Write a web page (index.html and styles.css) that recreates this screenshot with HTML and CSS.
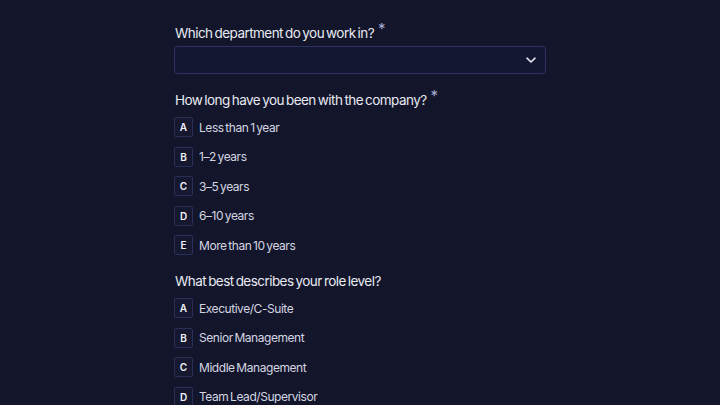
FILE: index.html
```html
<!DOCTYPE html>
<html lang="en">
<head>
<meta charset="utf-8">
<link rel="stylesheet" href="styles.css">
</head>
<body>
<main class="form">
  <section class="question">
    <label class="q-label">Which department do you work in? <span class="req">*</span></label>
    <div class="select">
      <svg class="chev" width="12" height="12" viewBox="0 0 12 12"><path d="M2 4.2 L6 8 L10 4.2" fill="none" stroke="#e4e4f0" stroke-width="1.6" stroke-linecap="round" stroke-linejoin="round"/></svg>
    </div>
  </section>
  <section class="question">
    <div class="q-label">How long have you been with the company? <span class="req">*</span></div>
    <ul class="options">
      <li class="opt"><span class="key">A</span><span class="txt">Less than 1 year</span></li>
      <li class="opt"><span class="key">B</span><span class="txt">1–2 years</span></li>
      <li class="opt"><span class="key">C</span><span class="txt">3–5 years</span></li>
      <li class="opt"><span class="key">D</span><span class="txt">6–10 years</span></li>
      <li class="opt"><span class="key">E</span><span class="txt">More than 10 years</span></li>
    </ul>
  </section>
  <section class="question">
    <div class="q-label">What best describes your role level?</div>
    <ul class="options">
      <li class="opt"><span class="key">A</span><span class="txt">Executive/C-Suite</span></li>
      <li class="opt"><span class="key">B</span><span class="txt">Senior Management</span></li>
      <li class="opt"><span class="key">C</span><span class="txt">Middle Management</span></li>
      <li class="opt"><span class="key">D</span><span class="txt">Team Lead/Supervisor</span></li>
    </ul>
  </section>
</main>
</body>
</html>
```
FILE: styles.css
```css
html, body {
  margin: 0;
  padding: 0;
  background: #13162a;
  height: 100%;
  overflow: hidden;
}
body {
  font-family: Inter, "Noto Sans", sans-serif;
  color: #e6e7f0;
}
.form {
  width: 372px;
  margin-left: 174px;
  padding-top: 23px;
  display: flex;
  flex-direction: column;
  gap: 16px;
}
.question {
  display: flex;
  flex-direction: column;
}
.q-label {
  font-size: 13.5px;
  line-height: 20px;
  letter-spacing: -0.55px;
  word-spacing: -1.2px;
  color: #e8e9f2;
  margin-left: 1px;
}
.req {
  color: #a9abd6;
  font-size: 15px;
  position: relative;
  top: -4px;
  margin-left: 2px;
}
.select {
  margin-top: 3px;
  height: 26px;
  border: 1px solid #2d3060;
  border-radius: 3px;
  background: #141732;
  display: flex;
  align-items: center;
  justify-content: flex-end;
  padding-right: 8px;
}
.chev { display: block; }
.options {
  list-style: none;
  margin: 7px 0 0;
  padding: 0;
  display: flex;
  flex-direction: column;
  gap: 9.5px;
}
.opt {
  display: flex;
  align-items: center;
  gap: 6px;
  height: 20px;
}
.key {
  box-sizing: border-box;
  width: 19px;
  height: 20px;
  border: 1px solid #2b2e58;
  border-radius: 2px;
  background: #15182f;
  display: flex;
  align-items: center;
  justify-content: center;
  font-size: 10px;
  font-weight: 600;
  color: #f2f2f8;
}
.txt {
  font-size: 12px;
  letter-spacing: -0.45px;
  word-spacing: -1.2px;
  color: #d4d5e2;
}
```
